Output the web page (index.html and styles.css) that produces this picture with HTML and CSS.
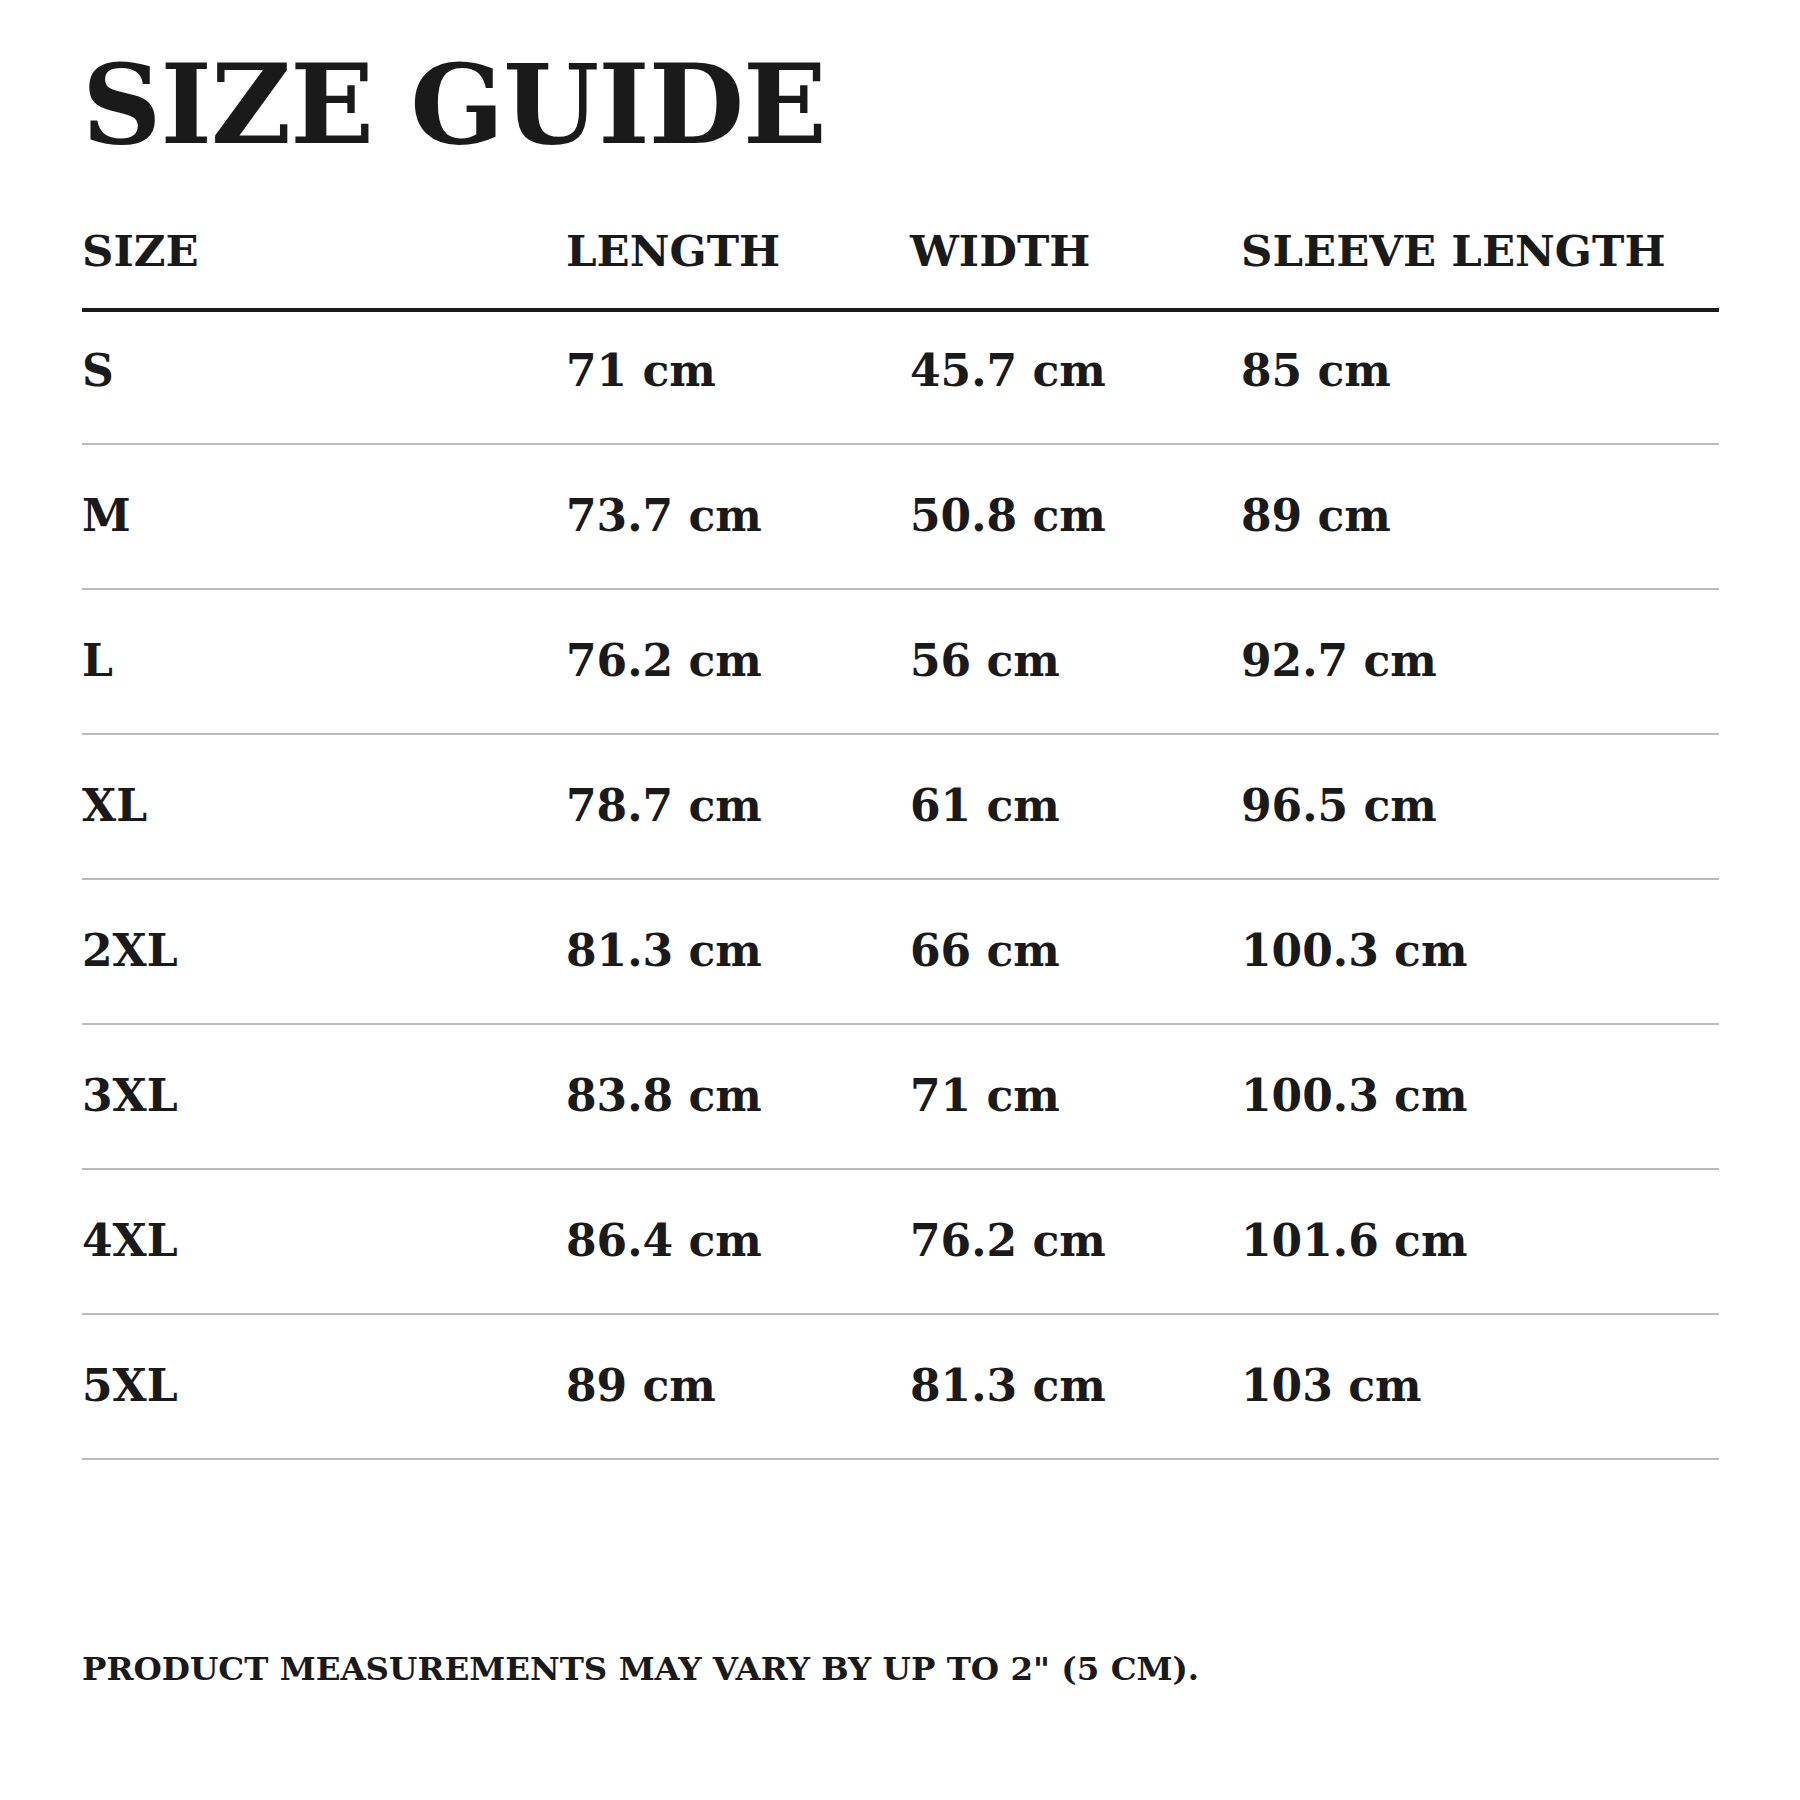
FILE: index.html
```html
<!DOCTYPE html>
<html lang="en">
<head>
<meta charset="utf-8">
<title>Size Guide</title>
<link rel="stylesheet" href="styles.css">
</head>
<body>
<main class="page">
  <h1 class="title">SIZE GUIDE</h1>
  <div class="chart">
    <div class="row head">
      <div>SIZE</div><div>LENGTH</div><div>WIDTH</div><div>SLEEVE LENGTH</div>
    </div>
    <div class="row first"><div>S</div><div>71 cm</div><div>45.7 cm</div><div>85 cm</div></div>
    <div class="row"><div>M</div><div>73.7 cm</div><div>50.8 cm</div><div>89 cm</div></div>
    <div class="row"><div>L</div><div>76.2 cm</div><div>56 cm</div><div>92.7 cm</div></div>
    <div class="row"><div>XL</div><div>78.7 cm</div><div>61 cm</div><div>96.5 cm</div></div>
    <div class="row"><div>2XL</div><div>81.3 cm</div><div>66 cm</div><div>100.3 cm</div></div>
    <div class="row"><div>3XL</div><div>83.8 cm</div><div>71 cm</div><div>100.3 cm</div></div>
    <div class="row"><div>4XL</div><div>86.4 cm</div><div>76.2 cm</div><div>101.6 cm</div></div>
    <div class="row"><div>5XL</div><div>89 cm</div><div>81.3 cm</div><div>103 cm</div></div>
  </div>
  <p class="note">PRODUCT MEASUREMENTS MAY VARY BY UP TO 2" (5 CM).</p>
</main>
</body>
</html>
```
FILE: styles.css
```css
html, body {
  margin: 0;
  padding: 0;
  background: #ffffff;
}
.page {
  width: 1800px;
  height: 1800px;
  box-sizing: border-box;
  padding: 50px 81px 0 82px;
  font-family: "DejaVu Serif", "Liberation Serif", serif;
  font-weight: bold;
  color: #1a1a1a;
}
.title {
  margin: 0;
  font-size: 110px;
  line-height: 110px;
  font-weight: bold;
  letter-spacing: -1px;
}
.chart {
  margin-top: 69px;
}
.row {
  display: grid;
  grid-template-columns: 484px 344px 331px 1fr;
  font-size: 44px;
  line-height: 44px;
  padding: 49px 0 50px;
  border-bottom: 2px solid #bbbbbb;
}
.row.head {
  font-size: 43.5px;
  padding: 0 0 35px;
  border-bottom: 4px solid #1a1a1a;
}
.row.first {
  padding-top: 37px;
}
.note {
  margin: 193px 0 0;
  font-size: 32.5px;
  line-height: 32px;
}
```
